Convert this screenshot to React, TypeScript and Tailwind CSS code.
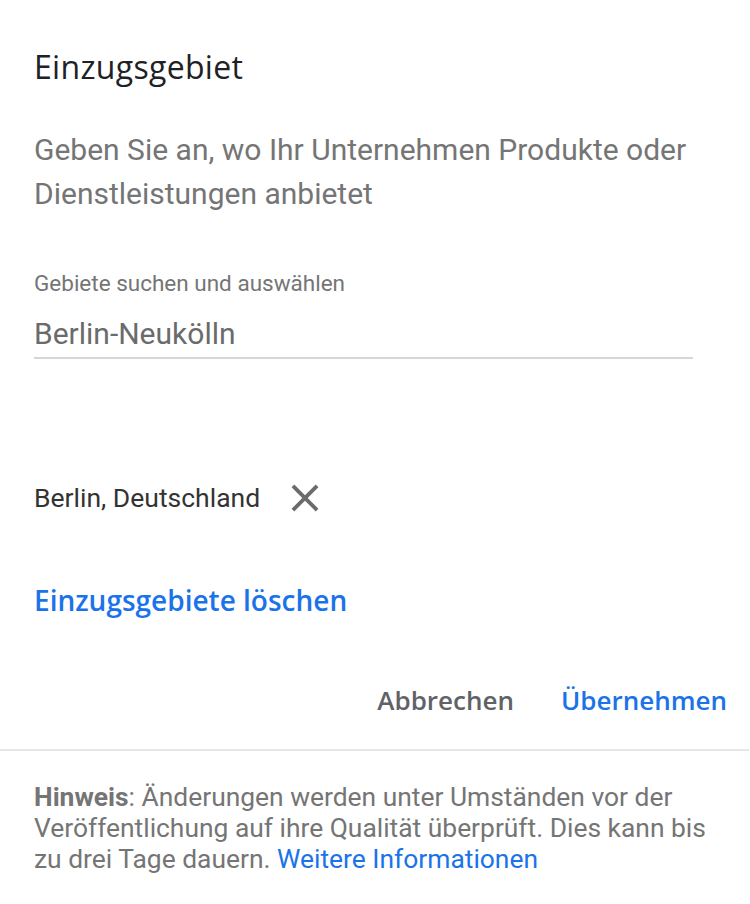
import React from 'react';

// ── Service area dialog ─────────────────────────────────────
const ROBOTO = 'font-["Roboto","Liberation_Sans",sans-serif]';
const HEAD = 'font-["Open_Sans","Roboto",sans-serif]';

function CloseIcon() {
  return (
    <svg viewBox="0 0 24 24" width="46" height="46" className="fill-[#6b6b6b]">
      <path d="M19 6.41L17.59 5 12 10.59 6.41 5 5 6.41 10.59 12 5 17.59 6.41 19 12 13.41 17.59 19 19 17.59 13.41 12z" />
    </svg>
  );
}

export default function App() {
  return (
    <div className={`w-[750px] h-[904px] bg-white ${ROBOTO}`}>
      <div className="px-[34px]">
        <h1 className={`pt-[47px] text-[32px] leading-[40px] tracking-[0.01em] text-[#202124] ${HEAD}`}>Einzugsgebiet</h1>

        <p className="mt-[41px] text-[30px] leading-[44px] text-[#757575]">
          Geben Sie an, wo Ihr Unternehmen Produkte oder Dienstleistungen anbietet
        </p>

        <div className="mt-[53px] w-[659px]">
          <label className="block text-[22.5px] leading-[28px] text-[#757575]">Gebiete suchen und auswählen</label>
          <div className="mt-[18px] pb-[4px] border-b-2 border-[#d6d6d6] text-[30px] leading-[38px] text-[#6b6b6b]">
            Berlin-Neukölln
          </div>
        </div>

        <div className="mt-[116px] flex items-center gap-[22px]">
          <span className="text-[26.5px] leading-[32px] text-[#333333]">Berlin, Deutschland</span>
          <CloseIcon />
        </div>

        <button className={`mt-[62px] block text-[28px] leading-[34px] font-semibold text-[#1a73e8] ${HEAD}`}>
          Einzugsgebiete löschen
        </button>
      </div>

      <div className={`mt-[66px] flex justify-end items-center gap-[47px] pr-[23px] text-[26px] leading-[34px] font-semibold ${HEAD}`}>
        <button className="text-[#5f6368]">Abbrechen</button>
        <button className="text-[#1a73e8]">Übernehmen</button>
      </div>

      <div className="mt-[32px] w-[749px] border-t-2 border-[#e6e6e6]" />

      <p className="mt-[31px] px-[34px] text-[26.4px] leading-[31px] text-[#757575]">
        <span className="font-bold">Hinweis</span>: Änderungen werden unter Umständen vor der Veröffentlichung auf ihre
        Qualität überprüft. Dies kann bis zu drei Tage dauern.{' '}
        <a className="text-[#1a73e8]">Weitere Informationen</a>
      </p>
    </div>
  );
}
